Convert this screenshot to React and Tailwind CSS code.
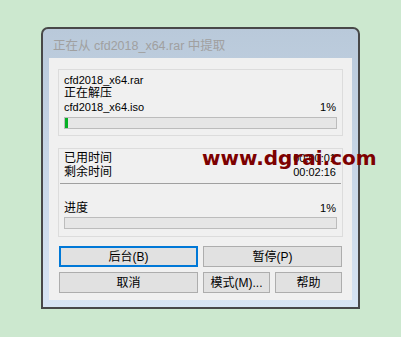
import React from 'react';

const font = { fontFamily: '"Liberation Sans", "Noto Sans CJK SC", sans-serif' };

const Bar = ({ pct }) => (
  <div className="h-[12px] border border-[#bcbcbc] bg-[#e6e6e6]">
    <div className="h-full bg-[#06b025]" style={{ width: pct }} />
  </div>
);

const Btn = ({ children, w, focus }) => (
  <div
    className={
      'h-[21px] flex items-center justify-center text-[12px] text-black bg-[#e1e1e1] ' +
      w +
      (focus ? ' border-2 border-[#0078d7]' : ' border border-[#adadad]')
    }
  >
    {children}
  </div>
);

const App = () => {
  return (
    <div className="relative w-[401px] h-[337px] bg-[#cce8cf] pt-[27px] pl-[41px]" style={font}>
      {/* window */}
      <div className="w-[319px] h-[282px] border-2 border-[#484848] rounded-t-[7px] bg-gradient-to-b from-[#b9c9da] to-[#d7e4f3] flex flex-col">
        <div className="h-[29px] pl-[10px] flex items-center text-[12.5px] text-[#a0a0a0] pt-[6px]">
          正在从 cfd2018_x64.rar 中提取
        </div>

        <div className="mx-[6px] h-[242px] bg-[#f0f0f0] pt-[11px] px-[9px]">
          {/* group 1 */}
          <div className="h-[67px] border border-[#dcdcdc] pt-[4px] px-[5px]">
            <div className="h-[13px] leading-[13px] text-[11px] text-black">cfd2018_x64.rar</div>
            <div className="h-[13px] leading-[13px] text-[12px] text-black">正在解压</div>
            <div className="h-[14px] leading-[14px] text-[11px] text-black flex justify-between pr-[1px]">
              <span>cfd2018_x64.iso</span>
              <span>1%</span>
            </div>
            <div className="mt-[3px]">
              <Bar pct="3px" />
            </div>
          </div>

          {/* group 2 */}
          <div className="mt-[12px] h-[89px] border border-[#dcdcdc] pt-[2px]">
            <div className="px-[5px]">
              <div className="h-[14px] leading-[14px] flex justify-between pr-[1px]">
                <span className="text-[12px]">已用时间</span>
                <span className="text-[11px]">00:00:01</span>
              </div>
              <div className="h-[14px] leading-[14px] flex justify-between pr-[1px]">
                <span className="text-[12px]">剩余时间</span>
                <span className="text-[11px]">00:02:16</span>
              </div>
            </div>
            <div className="mt-[4px] mx-[1px] h-px bg-[#a0a0a0]" />
            <div className="px-[5px]">
              <div className="mt-[17px] h-[14px] leading-[14px] flex justify-between pr-[1px]">
                <span className="text-[12px]">进度</span>
                <span className="text-[11px]">1%</span>
              </div>
              <div className="mt-[2px]">
                <Bar pct="0px" />
              </div>
            </div>
          </div>

          {/* buttons */}
          <div className="mt-[9px] pl-[1px] flex flex-col gap-[5px]">
            <div className="flex gap-[5px]">
              <Btn w="w-[139px]" focus>后台(B)</Btn>
              <Btn w="w-[139px]">暂停(P)</Btn>
            </div>
            <div className="flex gap-[5px]">
              <Btn w="w-[139px]">取消</Btn>
              <Btn w="w-[67px]">模式(M)...</Btn>
              <Btn w="w-[67px]">帮助</Btn>
            </div>
          </div>
        </div>
      </div>

      {/* watermark */}
      <div
        className="absolute left-[202px] top-[148px] text-[20px] leading-none font-bold text-[#7d0000] whitespace-nowrap"
        style={{ fontFamily: '"DejaVu Sans", sans-serif' }}
      >
        www.dgrai.com
      </div>
    </div>
  );
};

export default App;
